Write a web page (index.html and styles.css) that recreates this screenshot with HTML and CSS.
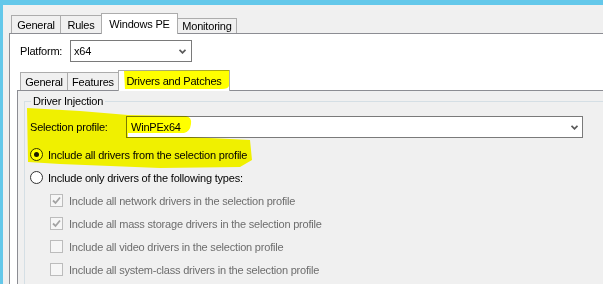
FILE: index.html
```html
<!DOCTYPE html>
<html lang="en">
<head>
    <meta charset="UTF-8">
    <title>Windows PE - Drivers and Patches</title>
    <link rel="stylesheet" href="styles.css">
</head>
<body>
    <div class="app">
        <div class="topbar"></div>
        <div class="window">
            <div class="tabs">
                <div class="tab tab-general">General</div>
                <div class="tab tab-rules">Rules</div>
                <div class="tab tab-winpe active">Windows PE</div>
                <div class="tab tab-monitoring">Monitoring</div>
            </div>
            <div class="page">
                <div class="platform-row">
                    <span class="platform-label">Platform:</span>
                    <div class="combo">
                        <span>x64</span>
                        <svg class="chevron" viewBox="0 0 7 5"><polyline points="0.5,0.8 3.5,3.8 6.5,0.8"></polyline></svg>
                    </div>
                </div>

                <div class="inner">
                    <div class="tabs inner-tabs">
                        <div class="tab itab-general">General</div>
                        <div class="tab itab-features">Features</div>
                        <div class="tab itab-drivers active">Drivers and Patches</div>
                    </div>
                    <div class="inner-page">
                        <fieldset class="group">
                            <legend>Driver Injection</legend>

                            <div class="profile-row">
                                <span class="profile-label">Selection profile:</span>
                                <div class="combo profile-combo">
                                    <span>WinPEx64</span>
                                    <svg class="chevron" viewBox="0 0 7 5"><polyline points="0.5,0.8 3.5,3.8 6.5,0.8"></polyline></svg>
                                </div>
                            </div>

                            <div class="option">
                                <span class="radio checked"></span>
                                <span>Include all drivers from the selection profile</span>
                            </div>
                            <div class="option">
                                <span class="radio"></span>
                                <span>Include only drivers of the following types:</span>
                            </div>

                            <div class="option sub disabled">
                                <span class="check"><svg viewBox="0 0 11 11"><polyline points="2,5.5 4.5,8 9,2.5"></polyline></svg></span>
                                <span>Include all network drivers in the selection profile</span>
                            </div>
                            <div class="option sub disabled">
                                <span class="check"><svg viewBox="0 0 11 11"><polyline points="2,5.5 4.5,8 9,2.5"></polyline></svg></span>
                                <span>Include all mass storage drivers in the selection profile</span>
                            </div>
                            <div class="option sub disabled">
                                <span class="check"></span>
                                <span>Include all video drivers in the selection profile</span>
                            </div>
                            <div class="option sub disabled">
                                <span class="check"></span>
                                <span>Include all system-class drivers in the selection profile</span>
                            </div>
                        </fieldset>
                    </div>
                </div>
            </div>
        </div>
    </div>

    <!-- marker highlight drawn over the screenshot -->
    <svg class="marker" viewBox="0 0 603 284">
        <path d="M124,71 L229,70 L229,86 Q228,89 222,89 L125,89 Z"></path>
        <path d="M27,108 L80,111 L128,115 L186,116 Q192,117 191,124 Q190,132 184,133 L128,133 L128,137 L190,137 L250,140 L252,160 L240,167 L160,168 L60,164 L28,162 Z"></path>
    </svg>
</body>
</html>
```

FILE: styles.css
```css
* {
    margin: 0;
    padding: 0;
    box-sizing: border-box;
}

html, body {
    height: 100%;
    overflow: hidden;
}

body {
    background-color: #f0f0f0;
    color: #000;
    font-family: 'Liberation Sans', Arial, sans-serif;
    font-size: 11px;
    letter-spacing: -0.2px;
}

.app {
    display: flex;
    flex-direction: column;
    height: 100%;
}

.topbar {
    flex-shrink: 0;
    height: 5px;
    background-color: #64c8ea;
}

.window {
    flex: 1;
    min-height: 0;
    display: flex;
    flex-direction: column;
    border-left: 3px solid #64c8ea;
    padding: 8px 0 0 6px;
}

/* tabs */

.tabs {
    flex-shrink: 0;
    display: flex;
    align-items: flex-end;
    height: 20px;
    padding-left: 2px;
}

.tab {
    height: 18px;
    border: 1px solid #acacac;
    border-bottom: none;
    background-color: #f0f0f0;
    display: flex;
    align-items: center;
    justify-content: center;
    margin-left: -1px;
    white-space: nowrap;
}

.tab:first-child {
    margin-left: 0;
}

.tab.active {
    height: 21px;
    margin-bottom: -1px;
    background-color: #fff;
    position: relative;
    z-index: 1;
    padding-bottom: 1px;
}

.tab-general { width: 50px; }
.tab-rules { width: 42px; }
.tab-winpe { width: 77px; }
.tab-monitoring { width: 60px; height: 15px; }

.page {
    flex: 1;
    min-height: 0;
    display: flex;
    flex-direction: column;
    background-color: #fff;
    border-top: 1px solid #8c8d93;
    border-left: 1px solid #8c8d93;
    padding: 6px 0 0 7px;
}

.platform-row {
    flex-shrink: 0;
    display: flex;
    align-items: center;
    padding-left: 3px;
}

.platform-label {
    width: 50px;
}

.combo {
    display: flex;
    align-items: center;
    justify-content: space-between;
    width: 122px;
    height: 22px;
    border: 1px solid #7a7a7a;
    background-color: #fff;
    padding: 0 5px 0 3px;
}

.chevron {
    width: 7px;
    height: 5px;
    fill: none;
    stroke: #5a5a5a;
    stroke-width: 1.8;
}

/* inner tab control */

.inner {
    flex: 1;
    min-height: 0;
    display: flex;
    flex-direction: column;
    margin-top: 8px;
}

.inner-tabs {
    padding-left: 3px;
}

.itab-general { width: 48px; }
.itab-features { width: 52px; }
.itab-drivers { width: 112px; }

.inner-page {
    flex: 1;
    background-color: #f0f0f0;
    border-top: 1px solid #8c8d93;
    border-left: 1px solid #8c8d93;
    padding: 4px 0 0 6px;
}

.group {
    border: none;
    border-top: 1px solid #d5dfe5;
    border-left: 1px solid #d5dfe5;
    padding: 0 0 0 5px;
    height: 200px;
}

.group legend {
    margin-left: 1px;
    padding: 0 2px;
    line-height: 13px;
}

.profile-row {
    display: flex;
    align-items: center;
    margin-top: 8px;
}

.profile-label {
    width: 96px;
}

.profile-combo {
    width: 457px;
    padding-left: 4px;
    padding-right: 4px;
}

.option {
    display: flex;
    align-items: center;
    height: 23px;
}

.profile-row + .option {
    margin-top: 5px;
}

.radio {
    width: 13px;
    height: 13px;
    border: 1px solid #333;
    border-radius: 50%;
    background-color: #fff;
    margin-right: 5px;
    display: flex;
    align-items: center;
    justify-content: center;
}

.radio.checked::after {
    content: "";
    width: 5px;
    height: 5px;
    border-radius: 50%;
    background-color: #1a1a1a;
}

.sub {
    padding-left: 20px;
}

.disabled {
    color: #6d6d6d;
}

.check {
    width: 13px;
    height: 13px;
    border: 1px solid #bcbcbc;
    background-color: #f6f6f6;
    margin-right: 6px;
}

.check svg {
    display: block;
    width: 11px;
    height: 11px;
    fill: none;
    stroke: #a3a3a3;
    stroke-width: 1.8;
}

.marker {
    position: absolute;
    left: 0;
    top: 0;
    z-index: 2;
    width: 603px;
    height: 284px;
    mix-blend-mode: multiply;
    pointer-events: none;
}

.marker path {
    fill: #ffff00;
}
```
